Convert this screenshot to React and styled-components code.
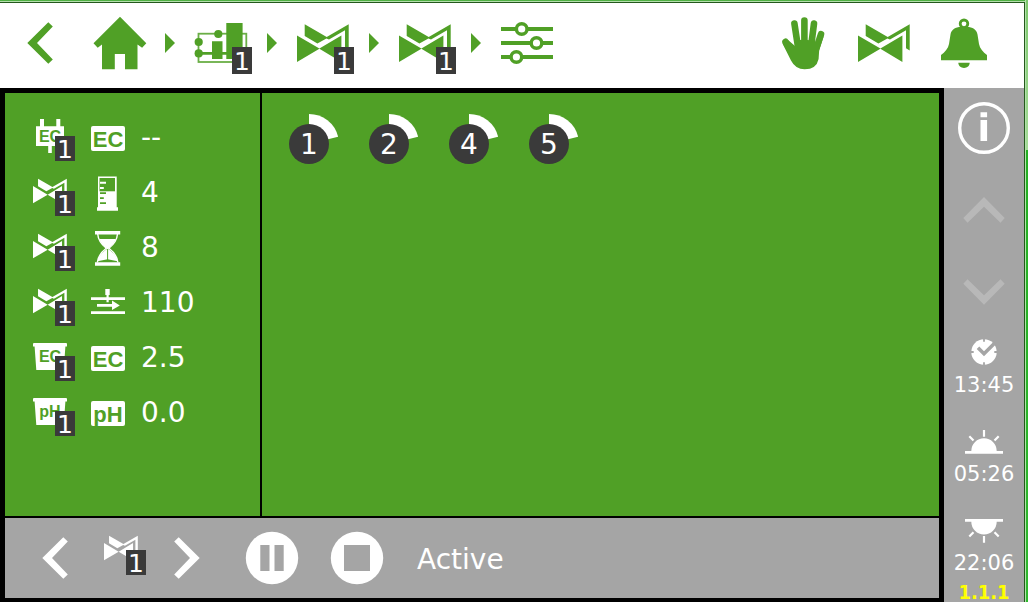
import React from "react";
import styled, { createGlobalStyle } from "styled-components";

const GREEN = "#50a026";
const GREY = "#a5a5a5";
const DARK = "#3a3a3a";
const FONT = 'Verdana, "DejaVu Sans", sans-serif';

const GlobalStyle = createGlobalStyle`
  *, *::before, *::after { box-sizing: border-box; }
  body { margin: 0; background: #000; font-family: ${FONT}; color: #fff; }
  h1, p, ul { margin: 0; padding: 0; }
  ul { list-style: none; }
`;

const WindowFrame = styled.div`
  display: flex;
  min-height: 100vh;
  background: linear-gradient(to bottom, #7cc86c 0, #a4dc98 25%, #22b022 25%, #2db82d 100%);
  padding-right: 2px;
`;

const Window = styled.div`
  flex: 1;
  min-width: 0;
  display: flex;
  flex-direction: column;
  border-right: 1px solid #b4e0ac;
`;

const TitleEdge = styled.div`
  height: 3px;
  flex: none;
  background: linear-gradient(to bottom, #4fb043 0 1px, #b4e0ac 1px 2px, #24591c 2px 3px);
`;

const Screen = styled.div`
  flex: 1;
  display: flex;
  flex-direction: column;
  border-right: 1px solid #24591c;
  background: #000;
`;

const Header = styled.header`
  display: flex;
  align-items: flex-start;
  justify-content: space-between;
  height: 85px;
  padding: 14px 34px 0 27px;
  background: #fff;
  color: ${GREEN};
`;

const Crumbs = styled.nav`
  display: flex;
  align-items: center;
  gap: 20px;
`;

const HeaderTools = styled.div`
  display: flex;
  gap: 28px;
`;

const IconButton = styled.button`
  position: relative;
  display: flex;
  flex: none;
  margin: 0;
  padding: 0;
  border: 0;
  background: none;
  color: inherit;
  font: inherit;
  cursor: pointer;
`;

const BackButton = styled(IconButton)`
  margin-right: 20px;
`;

const Body = styled.div`
  flex: 1;
  display: flex;
`;

const Main = styled.main`
  flex: 1;
  min-width: 0;
  display: flex;
  flex-direction: column;
  gap: 2px;
  padding: 5px 5px 4px;
`;

const Panels = styled.div`
  flex: 1;
  display: grid;
  grid-template-columns: 255px 1fr;
  gap: 2px;
`;

const Readings = styled.ul`
  padding: 16px 0 0 28px;
  background: ${GREEN};
`;

const Reading = styled.li`
  display: flex;
  align-items: flex-start;
  height: 55px;
  padding-top: 10px;
`;

const Source = styled.span`
  position: relative;
  display: flex;
  flex: none;
  margin-right: 24px;
`;

const Value = styled.span`
  margin-left: 16px;
  font-size: 28px;
  line-height: 37px;
`;

const Badge = styled.span`
  position: absolute;
  right: ${(p) => (p.$large ? "-5px" : "-8px")};
  bottom: ${(p) => (p.$large ? "-5px" : "-8px")};
  width: 20px;
  height: ${(p) => (p.$large ? "27px" : "25px")};
  background: ${DARK};
  color: #fff;
  font-size: 25px;
  line-height: ${(p) => (p.$large ? "30px" : "28px")};
  text-align: center;
`;

const Stations = styled.section`
  display: flex;
  flex-wrap: wrap;
  align-content: flex-start;
  gap: 20px;
  padding: 20px 17px;
  background: ${GREEN};
`;

const StationButton = styled(IconButton)`
  display: grid;
  place-items: center;
  width: 60px;
  height: 60px;

  > * { grid-area: 1 / 1; }
`;

const StationNumber = styled.span`
  position: relative;
  padding-top: 2px;
  font-size: 28px;
  line-height: 60px;
`;

const ControlBar = styled.footer`
  display: flex;
  align-items: center;
  height: 80px;
  padding-left: 37px;
  background: ${GREY};
`;

const Selector = styled.div`
  display: flex;
  align-items: center;
  gap: 36px;
  margin-right: 46px;
`;

const SelectedValve = styled.span`
  position: relative;
  display: flex;
  padding-bottom: 2px;
  margin-bottom: 18px;
`;

const Actions = styled.div`
  display: flex;
  gap: 33px;
  margin-right: 34px;
`;

const Status = styled.p`
  padding-top: 3px;
  font-size: 28px;
  line-height: 34px;
`;

const Sidebar = styled.aside`
  flex: none;
  display: flex;
  flex-direction: column;
  align-items: center;
  width: 80px;
  padding-top: 14px;
  background: ${GREY};
`;

const Scroller = styled.div`
  display: flex;
  flex-direction: column;
  gap: 56px;
  margin: 43px 0 34px;
  color: #b8b8b8;
`;

const Times = styled.ul`
  display: flex;
  flex-direction: column;
  gap: 31px;
`;

const TimeItem = styled.li`
  display: flex;
  flex-direction: column;
  align-items: center;
  gap: 8px;
  font-size: 21px;
  line-height: 24px;
`;

const Version = styled.p`
  margin-top: 7px;
  color: #ff0;
  font: bold 20px/20px "DejaVu Sans Condensed", "DejaVu Sans", sans-serif;
`;

const Svg = ({ w, h, box, children }) => (
  <svg width={w} height={h} viewBox={box || `0 0 ${w} ${h}`} fill="currentColor" aria-hidden="true" overflow="visible">
    {children}
  </svg>
);

const ChevronLeft = () => (
  <Svg w={26} h={42}><path d="M.3 21 21.3.3 25.8 4.5 10 21l15.8 16.5-4.5 4.2z" /></Svg>
);
const ChevronRight = () => (
  <Svg w={26} h={42}><path d="M25.7 21 4.7.3.2 4.5 16 21 .2 37.5l4.5 4.2z" /></Svg>
);
const ChevronUp = () => (
  <Svg w={42} h={26}><path d="M21 0 41.7 21l-4.2 4.7L21 9.7l-16.5 16L.3 21z" /></Svg>
);
const ChevronDown = () => (
  <Svg w={42} h={26}><path d="M21 25.7 41.7 4.8 37.5.2 21 16.2 4.5.2.3 4.8z" /></Svg>
);
const CrumbArrow = () => (
  <Svg w={10} h={20}><path d="M0 0 10 10 0 20z" /></Svg>
);
const HomeIcon = () => (
  <Svg w={52} h={52}>
    <path d="M27-.3 53.3 26.3l-4.2 4.4-4.6-3.2v24.8H32V37H21.8v15.3H9V27.5l-4.3 3.2L.5 26.3z" />
  </Svg>
);
const DosingIcon = () => (
  <Svg w={52} h={52}>
    <rect x="3.5" y="16.7" width="47.8" height="28.3" fill="none" stroke="currentColor" strokeWidth="1.8" opacity="0.85" />
    <circle cx="23.3" cy="17" r="4.1" />
    <circle cx="3.7" cy="25" r="4.1" />
    <circle cx="3.7" cy="36.4" r="4.1" />
    <path d="M3.7 35h28v2.800h-28zM17 24.300h10.500V42H17zM31.300 6h16.300v36H31.300z" />
  </Svg>
);
const ValveIcon = ({ size = 52 }) => (
  <Svg w={size} h={size} box="0 0 52 52">
    <path d="M7.7 7.2 29.7 20l22-12.8v26.2L48 31.3V13.2L32 22.4l-2.6-.9-9 5L7.7 18.9z" />
    <path d="M0 18.5l22.4 13.1L44.4 18.5v26.4L22.4 31.8 0 44.9z" />
  </Svg>
);
const SlidersIcon = () => (
  <Svg w={52} h={52}>
    <path d="M0 10h52v4H0zM0 24h52v4H0zM0 38h52v4H0z" />
    <g fill="#fff" stroke="currentColor" strokeWidth="3.4">
      <circle cx="20.7" cy="12" r="5.3" />
      <circle cx="35.5" cy="26" r="5.3" />
      <circle cx="15.4" cy="40" r="5.3" />
    </g>
  </Svg>
);
const HandIcon = () => (
  <Svg w={52} h={52}>
    <path
      d="M16.4 6.5 20 30M26.4 3.6V30M36 6.5 33 30M43 17.2 37.5 34M7.5 24.8 15 38"
      fill="none" stroke="currentColor" strokeWidth="6.6" strokeLinecap="round"
    />
    <path d="M4.5 26.4 13 43.5Q17.5 52.3 26.6 52.3 38.5 52.3 40.6 42L41.2 33 45.8 19 38 25 30 23h-8L17 29 9.8 22.8z" />
  </Svg>
);
const BellIcon = () => (
  <Svg w={52} h={52}>
    <circle cx="26" cy="6.8" r="3.8" fill="none" stroke="currentColor" strokeWidth="2.8" />
    <path d="M21 10h10c5.500 1 7.700 3.500 8.500 7.500l1.500 9.500c.8 4.500 4 8 8 11v5.200H3V38c4-3 7.200-6.500 8-11l1.500-9.500C13.300 13.500 15.500 11 21 10z" />
    <path d="M20.300 45.700h11.400c0 3-2.500 5.200-5.700 5.200s-5.700-2.200-5.700-5.200z" />
  </Svg>
);

const IconText = ({ x = 17, y, size, children }) => (
  <text x={x} y={y} fontSize={size} fontWeight="bold" fontFamily='Arial, "Liberation Sans", sans-serif' textAnchor="middle" fill={GREEN}>
    {children}
  </text>
);
const SensorIcon = () => (
  <Svg w={34} h={34}>
    <path d="M7 0h4v7.300h12.300V0h4v7.300H31V27H18.800v7h-3.600v-7H3V7.300h4z" />
    <IconText y={23} size={16}>EC</IconText>
  </Svg>
);
const TubIcon = ({ label }) => (
  <Svg w={34} h={34}>
    <path d="M1 4h32q1 0 1 1v2.600h-1.600L30.700 31H3.300L1.600 7.600H0V5q0-1 1-1z" />
    <IconText y={23} size={16}>{label}</IconText>
  </Svg>
);
const QuantityIcon = ({ label }) => (
  <Svg w={34} h={37}>
    <rect x="0" y="7" width="34" height="25" rx="2" />
    <IconText y={28} size={22}>{label}</IconText>
  </Svg>
);
const CylinderIcon = () => (
  <Svg w={34} h={37}>
    <path d="M7 2.500h18.700v30.700H27v3.500H6v-3.500h1z" />
    <path fill={GREEN} d="M8.500 4h15.500v13.300h-15.500z" />
    <path d="M9 7.700h6v2H9zM9 13h3.800v2H9z" />
    <path fill={GREEN} d="M9 18.300h6v1.700H9zM9 23.300h3.800V25H9zM9 28.300h6V30H9z" />
  </Svg>
);
const HourglassIcon = () => (
  <Svg w={34} h={37}>
    <path d="M4 2h25.200v3.400H4zM4 33.300h25.200v3.400H4z" />
    <path d="M6.700 5c.5 7 4.500 11 8.600 14.300C11 22.500 7 27 6.300 33.500M26.500 5c-.5 7-4.500 11-8.600 14.300 4.300 3.200 8.300 7.700 9 14.200" fill="none" stroke="currentColor" strokeWidth="1.400" />
    <path d="M8.300 10h16.600c-1.800 4.500-4.800 7-7.300 9.200v1.100c4.500 3.300 8.300 7 9 12l-10-2-10 2c.7-5 4.500-8.700 9-12v-1.100C13.100 17 10.100 14.500 8.300 10z" />
    <path d="M16.600 20v11" stroke={GREEN} strokeWidth="1" />
  </Svg>
);
const FlowIcon = () => (
  <Svg w={34} h={37}>
    <path d="M0 13.300h34V16H0zM0 27.300h34V30H0zM14.300 5h4.400v6h-4.400zM15.500 10h2.200v8.300h-2.200z" />
    <path d="M6 20h15v-3.400l7.800 4.800L21 26v-3.300H6z" />
  </Svg>
);
const StationDial = () => (
  <Svg w={60} h={60}>
    <path d="M30 30V0A30 30 0 0 1 59.100 22.700z" fill="#fff" />
    <circle cx="30" cy="30" r="20" fill={DARK} />
  </Svg>
);
const PauseIcon = () => (
  <Svg w={52} h={52}>
    <circle cx="26" cy="26" r="26.200" />
    <path fill={GREY} d="M14.300 13h9.200v26h-9.200zM28.500 13h9.200v26h-9.200z" />
  </Svg>
);
const StopIcon = () => (
  <Svg w={52} h={52}>
    <circle cx="26" cy="26" r="26.200" />
    <path fill={GREY} d="M13 13h26v26H13z" />
  </Svg>
);
const InfoIcon = () => (
  <Svg w={52} h={52}>
    <circle cx="26" cy="26" r="24.300" fill="none" stroke="currentColor" strokeWidth="3.400" />
    <path d="M22.500 10.300h6.600v5h-6.600zM22.500 18h6.600v21h-6.600z" />
  </Svg>
);
const ClockIcon = () => (
  <Svg w={38} h={26}>
    <circle cx="19" cy="13" r="12.700" />
    <path
      d="M19 0v2.700M19 23.300V26M6 13h2.700M29.300 13H32" stroke={GREY} strokeWidth="1.800"
    />
    <path d="m13 8.800 6 6L29.800 4" fill="none" stroke={GREY} strokeWidth="3.600" />
  </Svg>
);
const SunriseIcon = () => (
  <Svg w={38} h={26}>
    <path d="M0 23h38v2.700H0zM6.300 23a12.700 12.700 0 0 1 25.400 0z" />
    <path d="M19 2v6.700M4.300 8.300l4.200 4.200M33.700 8.300l-4.200 4.200" stroke="currentColor" strokeWidth="2.200" />
  </Svg>
);
const SunsetIcon = () => (
  <Svg w={38} h={26}>
    <path d="M0 2h38v2.700H0zM6.300 4.700a12.700 12.700 0 0 0 25.400 0z" />
    <path d="M19 19v6.700M4.300 19.500l4.200-4.200M33.700 19.500l-4.200-4.200" stroke="currentColor" strokeWidth="2.200" />
  </Svg>
);

const crumbs = [
  { name: "Home", icon: <HomeIcon /> },
  { name: "Dosing system", icon: <DosingIcon />, badge: "1" },
  { name: "Valve group", icon: <ValveIcon />, badge: "1" },
  { name: "Valve program", icon: <ValveIcon />, badge: "1" },
  { name: "Settings", icon: <SlidersIcon /> },
];

const readings = [
  { source: <SensorIcon />, quantity: <QuantityIcon label="EC" />, value: "--" },
  { source: <ValveIcon size={34} />, quantity: <CylinderIcon />, value: "4" },
  { source: <ValveIcon size={34} />, quantity: <HourglassIcon />, value: "8" },
  { source: <ValveIcon size={34} />, quantity: <FlowIcon />, value: "110" },
  { source: <TubIcon label="EC" />, quantity: <QuantityIcon label="EC" />, value: "2.5" },
  { source: <TubIcon label="pH" />, quantity: <QuantityIcon label="pH" />, value: "0.0" },
];

const stations = ["1", "2", "4", "5"];

const times = [
  { icon: <ClockIcon />, time: "13:45" },
  { icon: <SunriseIcon />, time: "05:26" },
  { icon: <SunsetIcon />, time: "22:06" },
];

export default function App() {
  return (
    <>
      <GlobalStyle />
      <WindowFrame>
        <Window>
          <TitleEdge />
          <Screen>
            <Header>
              <Crumbs aria-label="Breadcrumb">
                <BackButton aria-label="Back"><ChevronLeft /></BackButton>
                {crumbs.map((c, i) => (
                  <React.Fragment key={c.name}>
                    {i > 0 && <CrumbArrow />}
                    <IconButton aria-label={c.name}>
                      {c.icon}
                      {c.badge && <Badge $large>{c.badge}</Badge>}
                    </IconButton>
                  </React.Fragment>
                ))}
              </Crumbs>
              <HeaderTools>
                <IconButton aria-label="Manual control"><HandIcon /></IconButton>
                <IconButton aria-label="Valves"><ValveIcon /></IconButton>
                <IconButton aria-label="Alarms"><BellIcon /></IconButton>
              </HeaderTools>
            </Header>
            <Body>
              <Main>
                <Panels>
                  <Readings>
                    {readings.map((r, i) => (
                      <Reading key={i}>
                        <Source>{r.source}<Badge>1</Badge></Source>
                        {r.quantity}
                        <Value>{r.value}</Value>
                      </Reading>
                    ))}
                  </Readings>
                  <Stations aria-label="Stations">
                    {stations.map((s) => (
                      <StationButton key={s}>
                        <StationDial />
                        <StationNumber>{s}</StationNumber>
                      </StationButton>
                    ))}
                  </Stations>
                </Panels>
                <ControlBar>
                  <Selector>
                    <IconButton aria-label="Previous valve"><ChevronLeft /></IconButton>
                    <SelectedValve><ValveIcon size={34} /><Badge>1</Badge></SelectedValve>
                    <IconButton aria-label="Next valve"><ChevronRight /></IconButton>
                  </Selector>
                  <Actions>
                    <IconButton aria-label="Pause"><PauseIcon /></IconButton>
                    <IconButton aria-label="Stop"><StopIcon /></IconButton>
                  </Actions>
                  <Status>Active</Status>
                </ControlBar>
              </Main>
              <Sidebar>
                <IconButton aria-label="Information"><InfoIcon /></IconButton>
                <Scroller>
                  <IconButton aria-label="Scroll up"><ChevronUp /></IconButton>
                  <IconButton aria-label="Scroll down"><ChevronDown /></IconButton>
                </Scroller>
                <Times>
                  {times.map((t) => (
                    <TimeItem key={t.time}>{t.icon}<time>{t.time}</time></TimeItem>
                  ))}
                </Times>
                <Version>1.1.1</Version>
              </Sidebar>
            </Body>
          </Screen>
        </Window>
      </WindowFrame>
    </>
  );
}
